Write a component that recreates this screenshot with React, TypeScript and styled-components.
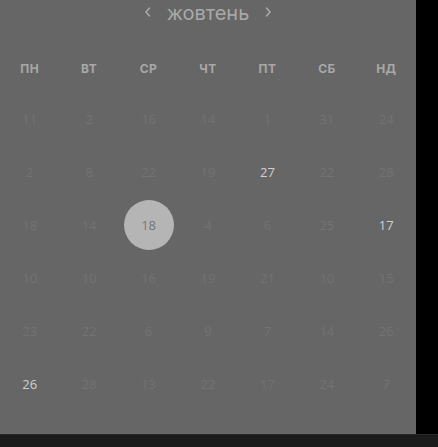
import React from "react";
import styled, { createGlobalStyle } from "styled-components";

const Global = createGlobalStyle`
  html, body { margin: 0; padding: 0; background: #000; }
  body { width: 438px; height: 447px; overflow: hidden; }
  #root { width: 438px; height: 447px; }
`;

const Page = styled.div`
  width: 438px;
  height: 447px;
  display: flex;
  flex-direction: column;
  background: #000;
`;

const Top = styled.div`
  display: flex;
  height: 434px;
`;

const Panel = styled.div`
  width: 416px;
  height: 434px;
  background: #666666;
  display: flex;
  flex-direction: column;
  font-family: "Open Sans", "Liberation Sans", sans-serif;
`;

const BottomBar = styled.div`
  flex: 1;
  background: #1b1b1b;
  border-top: 1px solid #2a2a2a;
`;

const MonthBar = styled.div`
  height: 30px;
  display: flex;
  align-items: center;
  justify-content: center;
  gap: 14px;
  color: #a9a9a9;
`;

const MonthName = styled.span`
  font-family: "Inter", "Liberation Sans", sans-serif;
  font-size: 20px;
  line-height: 24px;
  margin-top: -4px;
`;

const Chevron = styled.svg`
  width: 10px;
  height: 12px;
  margin-top: -6px;
`;

const Grid = styled.div`
  display: grid;
  grid-template-columns: repeat(7, 1fr);
`;

const WeekHead = styled.div`
  height: 22px;
  margin-top: 27px;
  display: flex;
  align-items: center;
  justify-content: center;
  font-family: "Inter", "Liberation Sans", sans-serif;
  font-weight: 700;
  font-size: 12px;
  color: #a8a8a8;
  letter-spacing: 0.4px;
`;

const DayCell = styled.div`
  height: 53px;
  display: flex;
  align-items: center;
  justify-content: center;
`;

const DayNum = styled.div<{ $tone: "dim" | "bright" | "sel" }>`
  width: 50px;
  height: 50px;
  border-radius: 50%;
  display: flex;
  align-items: center;
  justify-content: center;
  font-size: 13px;
  background: ${(p) => (p.$tone === "sel" ? "#b5b5b5" : "transparent")};
  color: ${(p) =>
    p.$tone === "sel" ? "#767676" : p.$tone === "bright" ? "#d0d0d0" : "#737373"};
`;

const Days = styled(Grid)`
  margin-top: 13px;
`;

const heads = ["ПН", "ВТ", "СР", "ЧТ", "ПТ", "СБ", "НД"];

type Tone = "dim" | "bright" | "sel";
const rows: [string, Tone][][] = [
  ["11", "2", "16", "14", "1", "31", "24"].map((d) => [d, "dim"]),
  [["2", "dim"], ["8", "dim"], ["22", "dim"], ["19", "dim"], ["27", "bright"], ["22", "dim"], ["28", "dim"]],
  [["18", "dim"], ["14", "dim"], ["18", "sel"], ["4", "dim"], ["6", "dim"], ["25", "dim"], ["17", "bright"]],
  ["10", "10", "16", "19", "21", "10", "15"].map((d) => [d, "dim"]),
  ["23", "22", "6", "9", "7", "14", "26"].map((d) => [d, "dim"]),
  [["26", "bright"], ["28", "dim"], ["13", "dim"], ["22", "dim"], ["17", "dim"], ["24", "dim"], ["7", "dim"]],
];

export default function App() {
  return (
    <Page>
      <Global />
      <Top>
        <Panel>
          <MonthBar>
            <Chevron viewBox="0 0 10 12">
              <path d="M6.5 2 L3 6 L6.5 10" fill="none" stroke="#a9a9a9" strokeWidth="1.6" strokeLinecap="round" strokeLinejoin="round" />
            </Chevron>
            <MonthName>жовтень</MonthName>
            <Chevron viewBox="0 0 10 12">
              <path d="M3.5 2 L7 6 L3.5 10" fill="none" stroke="#a9a9a9" strokeWidth="1.6" strokeLinecap="round" strokeLinejoin="round" />
            </Chevron>
          </MonthBar>
          <Grid>
            {heads.map((h) => (
              <WeekHead key={h}>{h}</WeekHead>
            ))}
          </Grid>
          <Days>
            {rows.flatMap((r, i) =>
              r.map(([d, t], j) => (
                <DayCell key={`${i}-${j}`}>
                  <DayNum $tone={t}>{d}</DayNum>
                </DayCell>
              ))
            )}
          </Days>
        </Panel>
      </Top>
      <BottomBar />
    </Page>
  );
}
